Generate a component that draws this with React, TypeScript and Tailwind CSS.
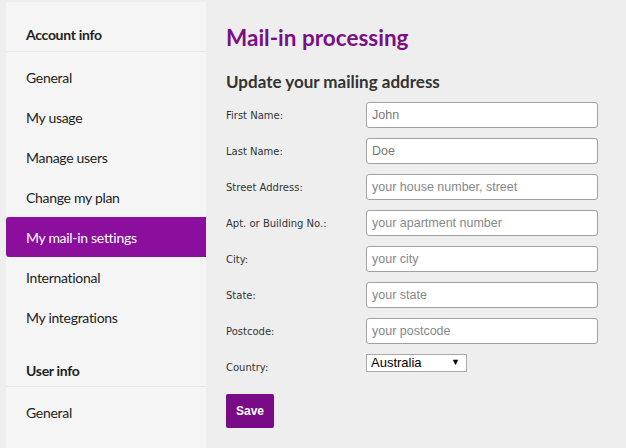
import React from "react";

const items = ["General", "My usage", "Manage users", "Change my plan", "My mail-in settings", "International", "My integrations"];

const fields: [string, string, boolean][] = [
  ["First Name:", "John", true],
  ["Last Name:", "Doe", true],
  ["Street Address:", "your house number, street", false],
  ["Apt. or Building No.:", "your apartment number", false],
  ["City:", "your city", false],
  ["State:", "your state", false],
  ["Postcode:", "your postcode", false],
];

export default function App() {
  return (
    <div className="flex h-[448px] w-[626px] overflow-hidden bg-[#eeeeee]">
      <aside className="ml-[6px] mt-[2px] w-[200px] shrink-0 bg-[#f5f5f5] font-['Lato',sans-serif] text-[14px] tracking-[-0.3px] text-[#222]">
        <div className="flex h-[50px] items-end border-b border-[#e8e8e8] pb-[8px] pl-[20px] font-bold leading-[16px]">Account info</div>
        <div className="pt-[5px]">
          {items.map((t) => (
            <div
              key={t}
              className={
                "flex h-[40px] items-center pl-[20px] " +
                (t === "My mail-in settings" ? "rounded-l-[3px] bg-[#8b0f9c] text-white" : "")
              }
            >
              {t}
            </div>
          ))}
        </div>
        <div className="flex h-[50px] items-end border-b border-[#e8e8e8] pb-[7px] pl-[20px] font-bold leading-[16px]">User info</div>
        <div className="pt-[5px]">
          <div className="flex h-[40px] items-center pl-[20px]">General</div>
        </div>
      </aside>
      <main className="pl-[20px] pt-[22px]">
        <h1 className="font-['Lato',sans-serif] text-[22.5px] font-bold leading-[32px] text-[#7b0f86]">Mail-in processing</h1>
        <h2 className="mt-[18px] font-['Lato',sans-serif] text-[17px] font-bold leading-[20px] text-[#333]">Update your mailing address</h2>
        <div className="mt-[10px] flex flex-col gap-[10px]">
          {fields.map(([label, val, filled]) => (
            <div key={label} className="flex h-[26px] items-center">
              <div className="w-[140px] font-['DejaVu_Sans',sans-serif] text-[10px] text-[#333]">{label}</div>
              <div
                className={
                  "flex h-[26px] w-[232px] items-center rounded-[3px] border border-[#a0a0a0] bg-white pl-[5px] font-['Liberation_Sans',sans-serif] text-[12.5px] " +
                  (filled ? "text-[#777]" : "text-[#888]")
                }
              >
                {val}
              </div>
            </div>
          ))}
          <div className="flex h-[26px]">
            <div className="flex w-[140px] items-center pt-[1px] font-['DejaVu_Sans',sans-serif] text-[10px] text-[#333]">Country:</div>
            <div className="flex h-[18px] w-[101px] items-center justify-between border border-[#a9a9a9] bg-white pl-[4px] pr-[6px] font-['Liberation_Sans',sans-serif] text-[13px] text-black">
              <span>Australia</span>
              <span className="text-[9px]">▼</span>
            </div>
          </div>
        </div>
        <button className="mt-[14px] flex h-[34px] w-[48px] items-center justify-center rounded-[2px] bg-[#7a0b86] font-['Liberation_Sans',sans-serif] text-[12px] font-bold text-white">
          Save
        </button>
      </main>
    </div>
  );
}
